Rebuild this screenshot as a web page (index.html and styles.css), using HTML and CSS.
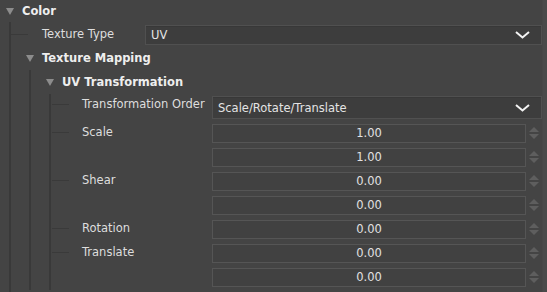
FILE: index.html
```html
<!DOCTYPE html>
<html lang="en">
<head>
    <meta charset="UTF-8">
    <title>Color Attributes</title>
    <link rel="stylesheet" href="styles.css">
</head>
<body>

<div class="panel">
    <div class="tree">
        <div class="section top">
            <div class="header"><span class="arrow"></span>Color</div>
            <div class="children">
                <div class="row">
                    <span class="branch"></span>
                    <span class="label wide">Texture Type</span>
                    <div class="combo">
                        <span>UV</span>
                        <svg class="chevron" width="15" height="8" viewBox="0 0 15 8"><polyline points="1,1 7.5,6.5 14,1"/></svg>
                    </div>
                </div>

                <div class="section">
                    <div class="header"><span class="arrow"></span>Texture Mapping</div>
                    <div class="children">
                        <div class="section">
                            <div class="header"><span class="arrow"></span>UV Transformation</div>
                            <div class="children">
                                <div class="props">
                                    <div class="prop order">
                                        <span class="branch"></span>
                                        <span class="label">Transformation Order</span>
                                        <div class="combo tall">
                                            <span>Scale/Rotate/Translate</span>
                                            <svg class="chevron" width="15" height="8" viewBox="0 0 15 8"><polyline points="1,1 7.5,6.5 14,1"/></svg>
                                        </div>
                                    </div>

                                    <div class="prop">
                                        <span class="branch"></span>
                                        <span class="label">Scale</span>
                                        <div class="fields">
                                            <div class="spin"><div class="value">1.00</div><div class="arrows"><i class="up"></i><i class="down"></i></div></div>
                                            <div class="spin"><div class="value">1.00</div><div class="arrows"><i class="up"></i><i class="down"></i></div></div>
                                        </div>
                                    </div>

                                    <div class="prop">
                                        <span class="branch"></span>
                                        <span class="label">Shear</span>
                                        <div class="fields">
                                            <div class="spin"><div class="value">0.00</div><div class="arrows"><i class="up"></i><i class="down"></i></div></div>
                                            <div class="spin"><div class="value">0.00</div><div class="arrows"><i class="up"></i><i class="down"></i></div></div>
                                        </div>
                                    </div>

                                    <div class="prop">
                                        <span class="branch"></span>
                                        <span class="label">Rotation</span>
                                        <div class="fields">
                                            <div class="spin"><div class="value">0.00</div><div class="arrows"><i class="up"></i><i class="down"></i></div></div>
                                        </div>
                                    </div>

                                    <div class="prop">
                                        <span class="branch"></span>
                                        <span class="label">Translate</span>
                                        <div class="fields">
                                            <div class="spin"><div class="value">0.00</div><div class="arrows"><i class="up"></i><i class="down"></i></div></div>
                                            <div class="spin"><div class="value">0.00</div><div class="arrows"><i class="up"></i><i class="down"></i></div></div>
                                        </div>
                                    </div>
                                </div>
                            </div>
                        </div>
                    </div>
                </div>
            </div>
        </div>
    </div>
    <div class="scroll"></div>
</div>

</body>
</html>
```

FILE: styles.css
```css
body {
    margin: 0;
    padding: 0;
    background-color: #444444;
    font-family: "DejaVu Sans", Verdana, sans-serif;
    font-size: 11.5px;
    color: #dedede;
}

.panel {
    display: flex;
    height: 292px;
    overflow: hidden;
}

.tree {
    flex: 1;
    padding-left: 6px;
}

.scroll {
    width: 4px;
    background-color: #4a4a4a;
    border-left: 1px solid #474747;
}

/* collapsible sections */
.header {
    display: flex;
    align-items: center;
    height: 24px;
    font-weight: bold;
    color: #eeeeee;
}

.top > .header {
    height: 22px;
}

.arrow {
    width: 0;
    height: 0;
    border-left: 4px solid transparent;
    border-right: 4px solid transparent;
    border-top: 7px solid #8c8c8c;
    margin-right: 8px;
}

.children {
    margin-left: 3px;
    border-left: 2px solid #393939;
    padding-bottom: 6px;
}

.children .children {
    padding-bottom: 0;
}

.section .section {
    margin-left: 15px;
}

.branch {
    width: 17px;
    height: 1px;
    background-color: #3a3a3a;
    flex-shrink: 0;
}

.label {
    margin-left: 14px;
    white-space: nowrap;
}

/* Texture Type row */
.row {
    display: flex;
    align-items: center;
    height: 24px;
}

.label.wide {
    width: 103px;
}

.combo {
    flex: 1;
    display: flex;
    align-items: center;
    justify-content: space-between;
    height: 20px;
    box-sizing: border-box;
    margin-top: 2px;
    padding: 0 11px 0 5px;
    background-color: #3d3d3d;
    border: 1px solid #505050;
    box-shadow: inset 0 1px 0 #383838;
    color: #e4e4e4;
}

.combo.tall {
    height: 23px;
}

.chevron polyline {
    fill: none;
    stroke: #f4f4f4;
    stroke-width: 2;
}

/* UV Transformation properties */
.prop {
    display: grid;
    grid-template-columns: 17px 144px 1fr;
    align-items: start;
}

.prop .branch {
    margin-top: 10px;
    margin-left: 1px;
}

.prop .label {
    line-height: 20px;
}

.prop.order {
    height: 28px;
}

.fields {
    display: flex;
    flex-direction: column;
}

.spin {
    display: flex;
    height: 24px;
    padding-top: 2px;
    box-sizing: border-box;
}

.value {
    flex: 1;
    height: 19px;
    box-sizing: border-box;
    border: 1px solid #555555;
    background-color: #414141;
    text-align: center;
    line-height: 17px;
    color: #e2e2e2;
}

.arrows {
    width: 16px;
    display: flex;
    flex-direction: column;
    align-items: center;
    padding-top: 3px;
}

.arrows i {
    width: 0;
    height: 0;
    border-left: 5px solid transparent;
    border-right: 5px solid transparent;
}

.arrows .up {
    border-bottom: 5px solid #5e5e5e;
    margin-bottom: 2px;
}

.arrows .down {
    border-top: 5px solid #5e5e5e;
}
```
